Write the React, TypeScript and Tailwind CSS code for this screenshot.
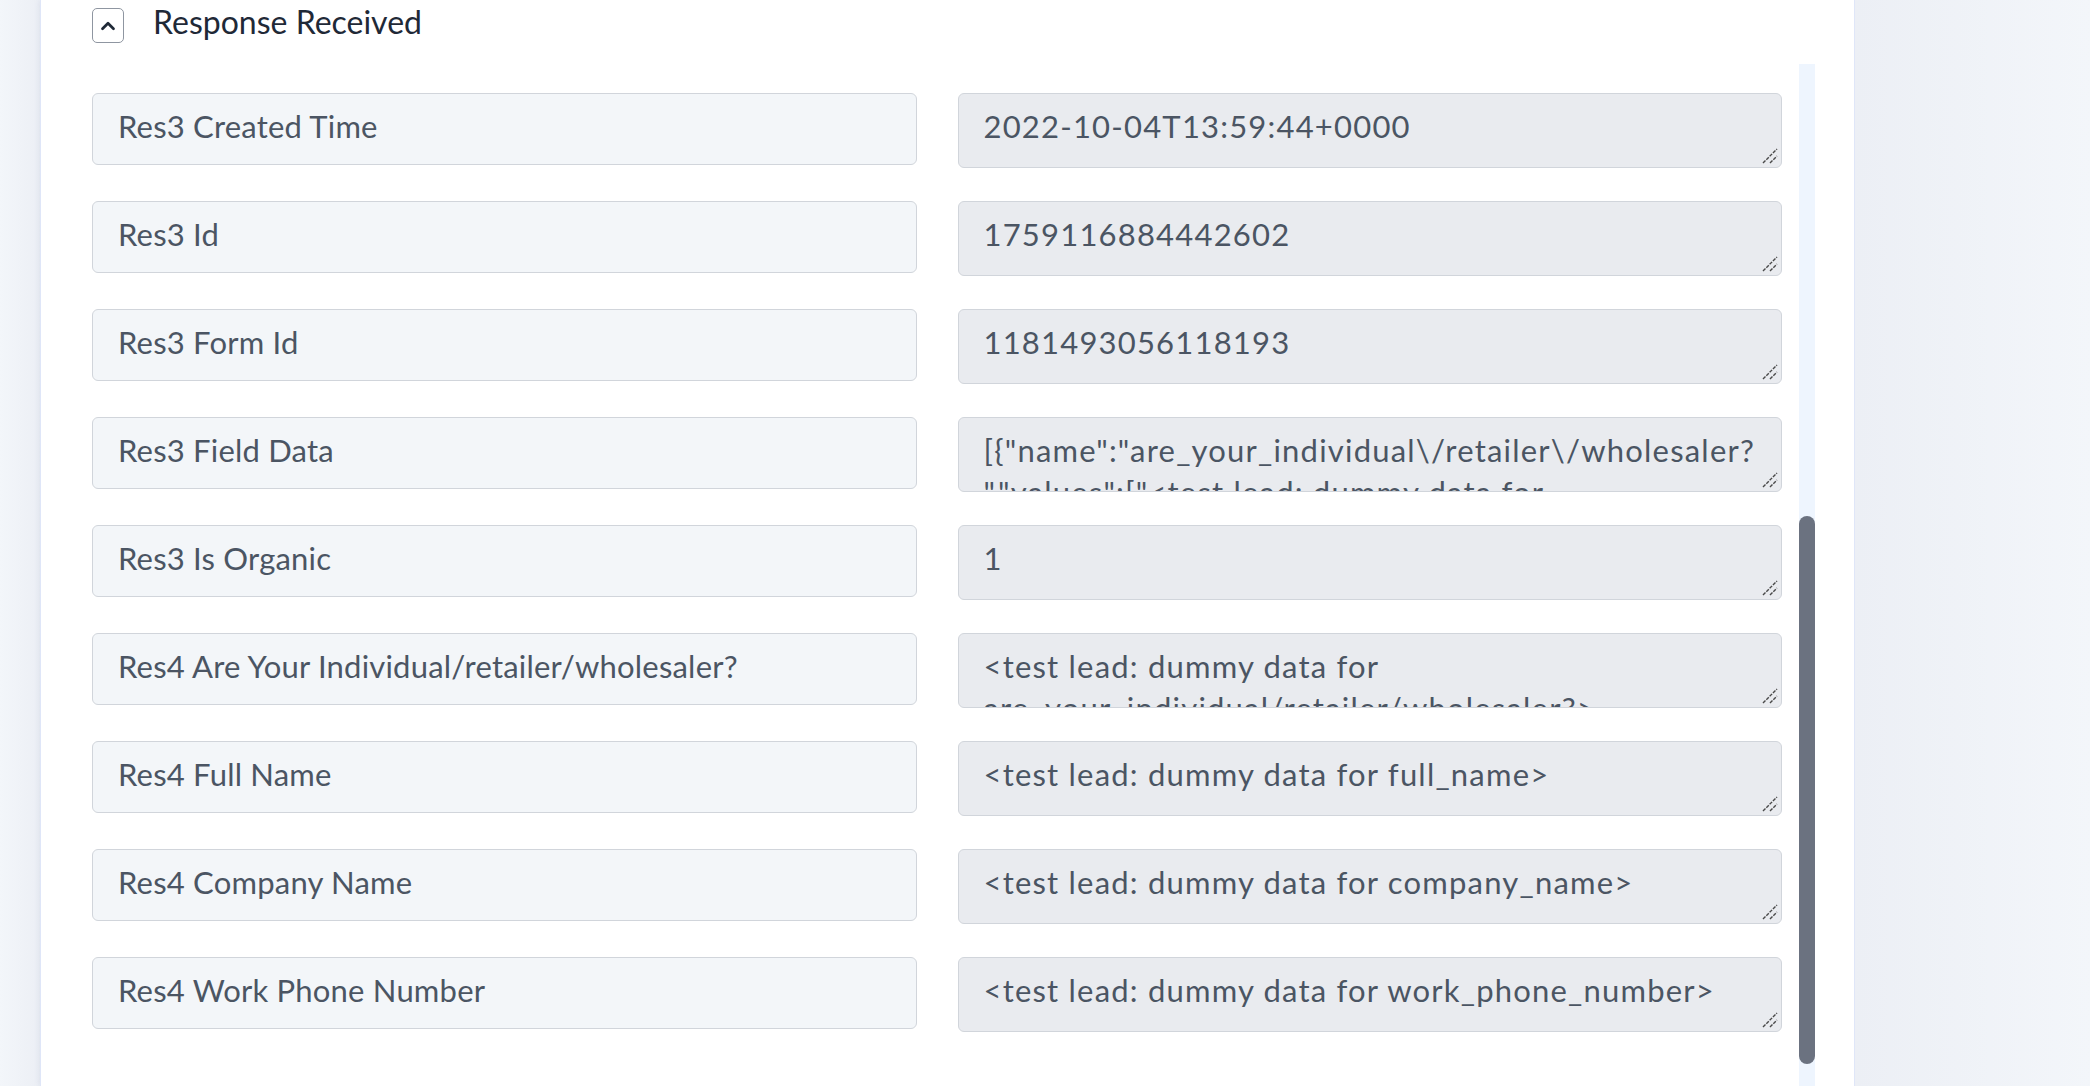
import React from "react";
import { ChevronUp } from "lucide-react";

type Row = { label: string; lines: string[] };

const rows: Row[] = [
  { label: "Res3 Created Time", lines: ["2022-10-04T13:59:44+0000"] },
  { label: "Res3 Id", lines: ["1759116884442602"] },
  { label: "Res3 Form Id", lines: ["1181493056118193"] },
  {
    label: "Res3 Field Data",
    lines: [
      '[{"name":"are_your_individual\\/retailer\\/wholesaler?',
      '","values":["<test lead: dummy data for',
    ],
  },
  { label: "Res3 Is Organic", lines: ["1"] },
  {
    label: "Res4 Are Your Individual/retailer/wholesaler?",
    lines: ["<test lead: dummy data for", "are_your_individual/retailer/wholesaler?>"],
  },
  { label: "Res4 Full Name", lines: ["<test lead: dummy data for full_name>"] },
  { label: "Res4 Company Name", lines: ["<test lead: dummy data for company_name>"] },
  { label: "Res4 Work Phone Number", lines: ["<test lead: dummy data for work_phone_number>"] },
];

function ResizeGrip() {
  return (
    <svg
      className="absolute right-[3px] bottom-[3px]"
      width="16"
      height="16"
      viewBox="0 0 16 16"
      fill="none"
    >
      <path d="M1 15 L15 1" stroke="#4a4a4a" strokeWidth="1.4" strokeDasharray="3.5 1.2" />
      <path d="M8 15 L15 8" stroke="#4a4a4a" strokeWidth="1.4" strokeDasharray="3.5 1.2" />
    </svg>
  );
}

function FieldRow({ row }: { row: Row }) {
  return (
    <>
      <div className="h-[72px] rounded-[6px] border border-[#d1d5db] bg-[#f3f6f9] pl-[25px] pt-[11px] text-[31px] leading-[42px] tracking-[0.2px] text-[#4b5563] whitespace-nowrap overflow-hidden">
        {row.label}
      </div>
      <div className="relative h-[75px] overflow-hidden rounded-[6px] border border-[#d1d5db] bg-[#e9ebef] pl-[25px] pr-[20px] pt-[11px] text-[31px] leading-[42px] tracking-[1.2px] text-[#4b5563]">
        {row.lines.map((l, i) => (
          <div key={i} className="whitespace-nowrap">
            {l}
          </div>
        ))}
        <ResizeGrip />
      </div>
    </>
  );
}

export default function App() {
  return (
    <div
      className="h-screen w-full overflow-hidden bg-[#f3f6fa] flex"
      style={{ fontFamily: "Lato, 'Noto Sans', sans-serif" }}
    >
      <div className="w-[40px] shrink-0 bg-gradient-to-r from-[#f3f6fa] to-[#eceff5]" />
      <div className="w-[1815px] shrink-0 h-full bg-white border-x border-[#dfe6f8] shadow-[0_0_6px_rgba(120,140,180,0.18)] pl-[51px] pr-[39px] flex flex-col">
        <div className="flex items-start gap-[29px]">
          <div className="mt-[8px] w-[32px] h-[35px] rounded-[5px] border-[1.5px] border-[#8f96a1] flex items-center justify-center">
            <ChevronUp size={22} strokeWidth={3} color="#1f2937" />
          </div>
          <div className="mt-[4px] text-[32px] leading-[36px] text-[#1f2937]">Response Received</div>
        </div>

        <div className="mt-[21px] flex flex-1 min-h-0 gap-[17px]">
          <div className="flex-1 pt-[29px]">
            <div className="grid grid-cols-2 gap-x-[41px] gap-y-[33px] items-start">
              {rows.map((r) => (
                <FieldRow key={r.label} row={r} />
              ))}
            </div>
          </div>
          <div className="w-[16px] shrink-0 bg-[#eef5fe] flex flex-col">
            <div className="h-[452px] shrink-0" />
            <div className="h-[548px] shrink-0 rounded-full bg-[#6b7280]" />
          </div>
        </div>
      </div>
      <div className="flex-1 bg-gradient-to-r from-[#eceff5] to-[#f3f6fa]" />
    </div>
  );
}
